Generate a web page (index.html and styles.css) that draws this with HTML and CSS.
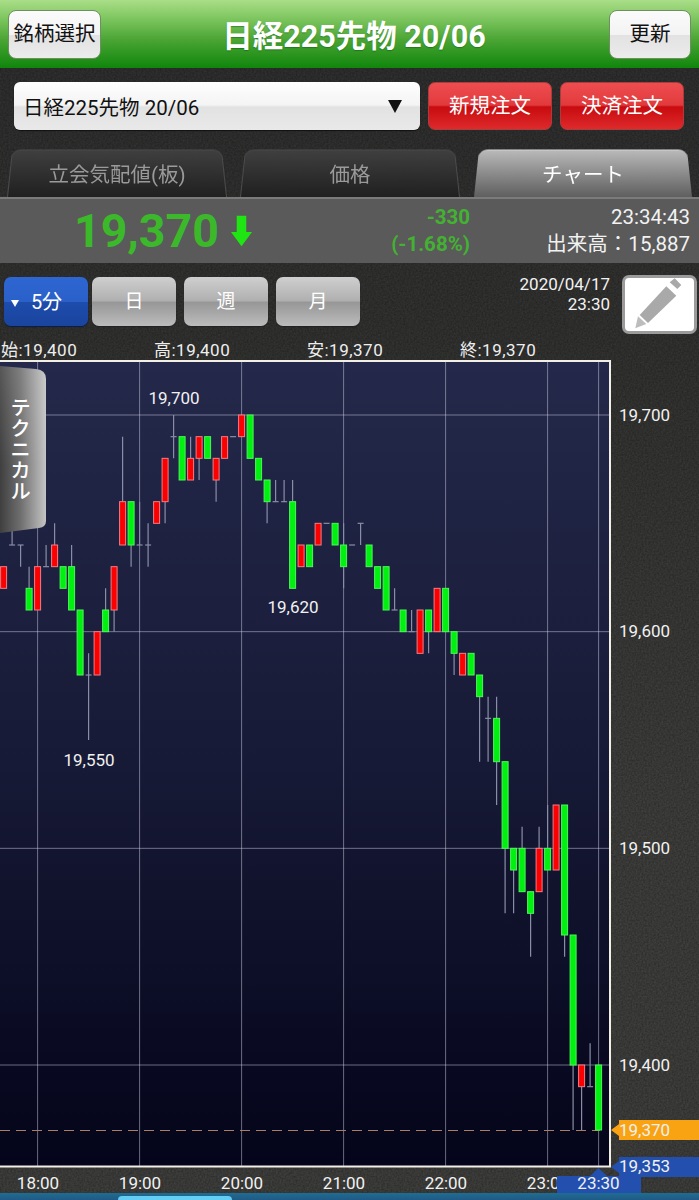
FILE: index.html
```html
<!DOCTYPE html>
<html lang="ja">
<head>
<meta charset="utf-8">
<title>日経225先物 チャート</title>
<link rel="stylesheet" href="styles.css">
</head>
<body>
<header class="header">
  <button class="btn btn-white btn-head btn-left">銘柄選択</button>
  <h1 class="title">日経225先物 20/06</h1>
  <button class="btn btn-white btn-head btn-right">更新</button>
</header>
<section class="order-row">
  <div class="select"><span>日経225先物 20/06</span><i class="select-arrow"></i></div>
  <button class="btn btn-red">新規注文</button>
  <button class="btn btn-red">決済注文</button>
</section>
<nav class="tabs">
  <div class="tab tab-1">立会気配値(板)</div>
  <div class="tab tab-2">価格</div>
  <div class="tab tab-3 tab-active">チャート</div>
</nav>
<section class="ticker">
  <div class="price-block">
    <span class="price">19,370</span>
    <svg class="down-arrow" viewBox="0 0 22 32"><path d="M6 0h10v17h6L11 32 0 17h6z"/></svg>
  </div>
  <div class="change"><div>-330</div><div>(-1.68%)</div></div>
  <div class="clock"><div>23:34:43</div><div>出来高：15,887</div></div>
</section>
<section class="toolbar">
  <button class="btn btn-period btn-blue"><i class="mini-arrow"></i>5分</button>
  <button class="btn btn-period btn-gray">日</button>
  <button class="btn btn-period btn-gray">週</button>
  <button class="btn btn-period btn-gray">月</button>
  <div class="stamp"><div>2020/04/17</div><div>23:30</div></div>
  <button class="pencil">
    <svg viewBox="0 0 69 53"><path class="pencil-tip" d="M10.3 50.3L13 38.3l8.3 7.7z"/><path d="M14.7 37L41.3 8.3l10 9.4L23 45z"/><path d="M44.7 4.3l5-4 6.6 6.7-4 4z"/></svg>
  </button>
</section>
<section class="ohlc">
  <span>始:19,400</span><span>高:19,400</span><span>安:19,370</span><span>終:19,370</span>
</section>
<main class="chart-wrap">
  <svg id="chart" class="chart" viewBox="0 360 699 833" width="699" height="833"></svg>
  <div class="technical"><span>テクニカル</span></div>
</main>
<footer class="footer"><div class="footer-pill"></div></footer>
<script src="chart.js"></script>
</body>
</html>
```
FILE: styles.css
```css
* { box-sizing: border-box; }
html, body { margin: 0; padding: 0; }
body {
  width: 699px;
  height: 1200px;
  overflow: hidden;
  display: flex;
  flex-direction: column;
  font-family: Roboto, "Noto Sans CJK JP", sans-serif;
  color: #fff;
  background-color: #3a3a38;
  background-image:
    url("data:image/svg+xml,%3Csvg xmlns='http://www.w3.org/2000/svg' width='160' height='160'%3E%3Cfilter id='n'%3E%3CfeTurbulence type='fractalNoise' baseFrequency='.55' numOctaves='2'/%3E%3CfeColorMatrix values='0 0 0 0 0 0 0 0 0 0 0 0 0 0 0 0 0 0 .45 -.1'/%3E%3C/filter%3E%3Crect width='160' height='160' filter='url(%23n)'/%3E%3C/svg%3E"),
    linear-gradient(#2f2f2f 0, #333332 350px, #3f3f3d 800px);
}
.btn {
  border: 0;
  padding: 0;
  margin: 0;
  font-family: inherit;
  font-size: 20.5px;
  line-height: 1;
}
.header {
  flex: none;
  height: 68px;
  display: flex;
  align-items: center;
  justify-content: space-between;
  padding: 0 8px;
  background: linear-gradient(#aade88 0%, #7cc55e 28%, #4ba535 58%, #0f860c 100%);
}
.title {
  margin: 0 0 0 -2px;
  font-size: 30.5px;
  font-weight: 700;
  color: #fff;
  text-shadow: 0 1px 1px rgba(0, 70, 0, .4);
}
.btn-white {
  color: #111;
  border: 1px solid #6f8f62;
  border-radius: 8px;
  background: linear-gradient(#fbfbfb 0%, #f3f3f3 50%, #e2e2e2 52%, #ececec 100%);
}
.btn-head { height: 49px; }
.btn-left { width: 93px; }
.btn-right { width: 82px; }
.order-row {
  flex: none;
  display: flex;
  gap: 8px;
  height: 48px;
  margin-top: 14px;
  padding-left: 14px;
}
.select {
  width: 406px;
  display: flex;
  align-items: center;
  justify-content: space-between;
  padding: 0 18px 0 9px;
  color: #111;
  font-size: 20.5px;
  border-radius: 6px;
  background: linear-gradient(#fefefe 0%, #f4f4f4 48%, #e2e2e2 52%, #e9e9e9 100%);
  box-shadow: 0 1px 1px #111;
}
.select-arrow {
  width: 0;
  height: 0;
  border-left: 7px solid transparent;
  border-right: 7px solid transparent;
  border-top: 13px solid #111;
}
.btn-red {
  width: 124px;
  color: #fff;
  border: 1px solid #a93c3c;
  border-radius: 7px;
  background: linear-gradient(#ee4d50 0%, #e23a3c 48%, #c80b0f 52%, #de2a2c 100%);
}
.tabs {
  flex: none;
  position: relative;
  height: 48px;
  margin-top: 19px;
  display: flex;
}
.tab {
  position: relative;
  z-index: 0;
  height: 48px;
  display: flex;
  align-items: center;
  justify-content: center;
  font-size: 20.5px;
  color: #9a9a9a;
}
.tab::before {
  content: "";
  position: absolute;
  inset: -2px 0 0;
  z-index: -1;
  border: 1px solid #4b4b4b;
  border-bottom: 0;
  border-radius: 9px 9px 0 0;
  background: linear-gradient(#3f3f3f, #202020);
  transform: perspective(90px) rotateX(5deg);
  transform-origin: bottom;
}
.tab-1 { margin-left: 7px; width: 220px; }
.tab-2 { margin-left: 13px; width: 220px; }
.tab-3 { margin-left: 14px; width: 218px; }
.tab-active { color: #fff; }
.tab-active::before {
  border: 0;
  border-top: 1px solid #ddd;
  background: linear-gradient(#b9b9b9, #5f5f5f);
}
.ticker {
  flex: none;
  height: 66px;
  display: flex;
  align-items: center;
  padding: 0 9px 0 74px;
  background: #5a5a5a;
  border-top: 2px solid #7b7b7b;
}
.price-block {
  flex: none;
  width: 179px;
  display: flex;
  align-items: center;
  gap: 12px;
}
.price {
  font-size: 46.5px;
  font-weight: 700;
  line-height: 1;
  color: #3bb92b;
}
.down-arrow { width: 21px; height: 32px; fill: #1fe612; }
.change {
  flex: none;
  width: 217px;
  text-align: right;
  font-size: 20.5px;
  font-weight: 700;
  line-height: 27px;
  color: #43b232;
}
.clock {
  margin-left: auto;
  text-align: right;
  font-size: 20.5px;
  line-height: 27px;
  color: #f2f2f2;
}
.toolbar {
  flex: none;
  height: 77px;
  display: flex;
  align-items: flex-start;
  padding: 14px 2px 0 4px;
  gap: 8px;
}
.btn-period {
  width: 84px;
  height: 49px;
  border-radius: 7px;
  font-size: 19px;
  color: #fff;
}
.btn-blue {
  position: relative;
  padding-left: 1px;
  background: linear-gradient(#2e66d2 0%, #2a60c8 50%, #1d4cac 52%, #1a459e 100%);
  box-shadow: 0 1px 1px #0a1d45;
  margin-right: -4px;
  font-size: 20px;
}
.mini-arrow {
  position: absolute;
  left: 7px;
  top: 23px;
  width: 0;
  height: 0;
  border-left: 4px solid transparent;
  border-right: 4px solid transparent;
  border-top: 7px solid #fff;
}
.btn-gray {
  background: linear-gradient(#cfcfcf 0%, #b0b0b0 48%, #979797 52%, #bcbcbc 100%);
  box-shadow: 0 1px 1px #222;
}
.stamp {
  margin-left: auto;
  margin-right: 4px;
  margin-top: -3px;
  text-align: right;
  font-size: 17px;
  line-height: 20px;
  color: #f2f2f2;
}
.pencil {
  width: 75px;
  height: 59px;
  margin-top: -2px;
  padding: 0;
  border: 3px solid #9b9b9b;
  border-radius: 7px;
  background: #fff;
}
.pencil svg { display: block; width: 100%; height: 100%; fill: #a9a9a9; }
.pencil .pencil-tip { fill: #bdbdbd; }
.ohlc {
  flex: none;
  height: 20px;
  display: grid;
  grid-template-columns: repeat(4, 153px);
  padding-left: 1px;
  font-size: 17px;
  line-height: 20px;
  letter-spacing: .5px;
  color: #eee;
}
.chart-wrap {
  flex: none;
  position: relative;
  height: 833px;
}
.chart { display: block; }
.plot-bg { fill: url(#plotGradient); }
.plot-frame { fill: none; stroke: #f2efe6; stroke-width: 2; }
.grid { stroke: rgba(205, 208, 230, .5); stroke-width: 1; }
.dash { stroke: #a97f62; stroke-width: 1; stroke-dasharray: 10 6; }
.wick { stroke: #8a8da6; stroke-width: 1.2; }
.candle-up { fill: #fb0000; stroke: #ef7f86; stroke-width: 1; }
.candle-down { fill: #00f010; stroke: #4ff55a; stroke-width: 1; }
.label { fill: #f1f1f1; font-size: 17px; font-family: Roboto, sans-serif; }
.label-mid { text-anchor: middle; }
.tag-orange { fill: #f9a313; }
.tag-blue { fill: #2350ae; }
.technical {
  position: absolute;
  left: 0;
  top: 6px;
  width: 46px;
  height: 167px;
  display: flex;
  align-items: center;
  justify-content: center;
  padding-right: 9px;
  background: linear-gradient(90deg, #3f3f3f 0%, #6f6f6f 45%, #c4c4c4 100%);
  clip-path: path("M0 0L36 3Q46 4 46 13L46 155Q46 161 39 162L0 167Z");
}
.technical::after {
  content: "";
  position: absolute;
  inset: 0;
  background: linear-gradient(rgba(255,255,255,.12), rgba(0,0,0,0) 60%);
}
.technical span {
  writing-mode: vertical-rl;
  font-size: 20.5px;
  font-weight: 500;
  letter-spacing: .5px;
  color: #fff;
}
.footer {
  flex: none;
  height: 7px;
  padding-left: 118px;
  padding-top: 3px;
  background: linear-gradient(#1f6d92, #205a86);
}
.footer-pill {
  width: 114px;
  height: 4px;
  border-radius: 4px 4px 0 0;
  background: #63cdf3;
}
```
FILE: chart.js
```js
(function () {
  var NS = "http://www.w3.org/2000/svg";
  var svg = document.getElementById("chart");

  function el(name, attrs, parent, text) {
    var node = document.createElementNS(NS, name);
    for (var k in attrs) node.setAttribute(k, attrs[k]);
    if (text) node.textContent = text;
    (parent || svg).appendChild(node);
    return node;
  }
  function y(p) { return 415 + (19700 - p) * 2.1667; }
  function x(i) { return 37.6 + 8.5 * i; }

  var defs = el("defs", {});
  var grad = el("linearGradient", { id: "plotGradient", x1: 0, y1: 0, x2: 0, y2: 1 }, defs);
  el("stop", { offset: "0", "stop-color": "#24284a" }, grad);
  el("stop", { offset: ".5", "stop-color": "#171a36" }, grad);
  el("stop", { offset: "1", "stop-color": "#04041a" }, grad);

  el("rect", { class: "plot-bg", x: -2, y: 361, width: 612, height: 805 });

  [19700, 19600, 19500, 19400].forEach(function (p) {
    el("line", { class: "grid", x1: 0, x2: 610, y1: y(p), y2: y(p) });
    el("text", { class: "label", x: 619, y: y(p) + 5.5 }, svg, String(p).replace(/(\d\d)(\d{3})/, "$1,$2"));
  });
  [0, 12, 24, 36, 48, 60, 66].forEach(function (i) {
    el("line", { class: "grid", x1: x(i), x2: x(i), y1: 361, y2: 1166 });
  });
  el("line", { class: "dash", x1: 0, x2: 600, y1: 1130.5, y2: 1130.5 });

  // [open, close, high, low] in yen; index -4 is the first candle on the left.
  var data = [
    [19620,19630],[19640,19640,19660],[19640,19640,19640,19630],[19620,19610,19630],
    [19610,19630],[19630,19630,19640],[19630,19640,19650],[19630,19620],
    [19630,19610,19640],[19610,19580],[19580,19580,19590,19550],[19580,19600],
    [19610,19600,19620],[19610,19630,19630,19600],[19640,19660,19690],[19660,19640,19660,19630],
    [19640,19640,19660],[19640,19640,19650,19630],[19650,19660],[19660,19680,19680,19650],
    [19690,19690,19700,19680],[19690,19670],[19670,19680,19690],[19680,19690,19690,19670],
    [19690,19680],[19670,19680,19680,19660],[19680,19690],[19690,19690],
    [19690,19700],[19700,19680],[19680,19670],[19670,19660,19670,19650],
    [19660,19660,19670],[19660,19660,19670],[19660,19620,19670],[19630,19640],
    [19640,19630],[19640,19650],[19650,19650],[19650,19640],
    [19640,19630,19650,19620],[19640,19640],[19650,19650,19650,19640],[19640,19630],
    [19630,19620],[19630,19610],[19610,19610,19620],[19610,19600],
    [19600,19600,19610],[19590,19610],[19610,19600,19610,19590],[19600,19620],
    [19620,19600],[19600,19590,19600,19580],[19580,19590],[19590,19580],
    [19580,19570,19580,19540],[19560,19560,19570,19540],[19560,19540,19570,19520],[19540,19500,19540,19470],
    [19500,19490,19500,19470],[19500,19480,19510],[19480,19470,19480,19450],[19480,19500,19510],
    [19500,19490,19520],[19490,19520],[19520,19460,19520,19450],[19460,19400,19460,19370],
    [19390,19400,19400,19370],[19390,19390,19410],[19400,19370]
  ];

  data.forEach(function (d, n) {
    var cx = x(n - 4), o = d[0], c = d[1];
    var top = Math.max(o, c), bot = Math.min(o, c);
    var h = d[2] === undefined ? top : d[2];
    var l = d[3] === undefined ? bot : d[3];
    if (h > top || l < bot) {
      el("line", { class: "wick", x1: cx, x2: cx, y1: y(h), y2: y(l) });
    }
    if (o === c) {
      el("line", { class: "wick", x1: cx - 3, x2: cx + 3, y1: y(o), y2: y(o) });
    } else {
      el("rect", {
        class: c > o ? "candle-up" : "candle-down",
        x: cx - 3, y: y(top), width: 6, height: y(bot) - y(top)
      });
    }
  });

  el("rect", { class: "plot-frame", x: -3, y: 361, width: 613, height: 805.5 });

  [["19,700", 174, 404], ["19,620", 293, 613], ["19,550", 89, 766]].forEach(function (t) {
    el("text", { class: "label label-mid", x: t[1], y: t[2] }, svg, t[0]);
  });
  [["18:00", 38], ["19:00", 140], ["20:00", 242], ["21:00", 344], ["22:00", 446], ["23:00", 548]].forEach(function (t) {
    el("text", { class: "label label-mid", x: t[1], y: 1189 }, svg, t[0]);
  });

  el("path", { class: "tag-orange", d: "M611 1130l8-6v-4h80v20h-80v-4z" });
  el("text", { class: "label", x: 619, y: 1135.5 }, svg, "19,370");
  el("path", { class: "tag-blue", d: "M611 1167l8-6v-4h80v20h-80v-4z" });
  el("text", { class: "label", x: 619, y: 1172 }, svg, "19,353");
  el("path", { class: "tag-blue", d: "M557 1193v-17h33l8.5-8 8.5 8h34v17z" });
  el("text", { class: "label label-mid", x: 598.5, y: 1189 }, svg, "23:30");
})();
```
